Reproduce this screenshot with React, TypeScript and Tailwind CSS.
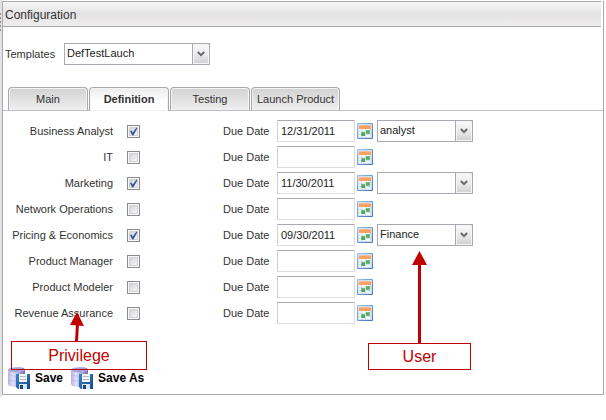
import { useState } from "react";

type Row = { id: string; label: string; checked: boolean; due: string; user?: string };

const rows: Row[] = [
  { id: "analyst", label: "Business Analyst", checked: true, due: "12/31/2011", user: "analyst" },
  { id: "it", label: "IT", checked: false, due: "" },
  { id: "marketing", label: "Marketing", checked: true, due: "11/30/2011", user: "" },
  { id: "network", label: "Network Operations", checked: false, due: "" },
  { id: "pricing", label: "Pricing & Economics", checked: true, due: "09/30/2011", user: "Finance" },
  { id: "manager", label: "Product Manager", checked: false, due: "" },
  { id: "modeler", label: "Product Modeler", checked: false, due: "" },
  { id: "revenue", label: "Revenue Assurance", checked: false, due: "" },
];

const tabs = ["Main", "Definition", "Testing", "Launch Product"];

function ComboBox({ id, label, value, options, width }: { id: string; label?: string; value: string; options: string[]; width: string }) {
  return (
    <div className={`relative h-[22px] ${width}`}>
      <select
        id={id}
        aria-label={label}
        defaultValue={value}
        className="block h-full w-full appearance-none border border-[#a9a9b1] bg-white pb-[2px] pl-[2px] pr-5 text-[11px] leading-[18px] text-[#222222] outline-none"
      >
        {options.map((o) => (
          <option key={o} value={o}>{o}</option>
        ))}
      </select>
      <span className="pointer-events-none absolute inset-y-0 right-0 flex w-[18px] items-center justify-center rounded-tr-[2px] border border-[#a9a9b1] bg-linear-to-b from-[#f8f8f8] via-[#ececed] to-[#d0d0d3] shadow-[inset_0_0_0_1px_#f4f4f4]">
        <svg width="8" height="6" viewBox="0 0 8 6" fill="none" stroke="#69696e" strokeWidth="2">
          <path d="M0.8 1 L4 4.2 L7.2 1" />
        </svg>
      </span>
    </div>
  );
}

function CheckBox({ id, checked }: { id: string; checked: boolean }) {
  return (
    <span className="relative block size-[13px]">
      <input
        id={id}
        type="checkbox"
        defaultChecked={checked}
        className="peer block size-[13px] appearance-none border border-[#8a8b8d] bg-linear-to-br from-[#c9cacd] to-[#ffffff] shadow-[inset_0_0_0_1px_#f8f8f8,inset_0_0_0_2px_#d0d2d5]"
      />
      <svg className="pointer-events-none absolute inset-0 hidden peer-checked:block" width="13" height="13" viewBox="0 0 13 13">
        <path d="M3 6 L4.6 5.4 L5.8 7.4 L9.4 2.4 L10.4 3.2 L6.4 10.4 L5 10.2 Z" fill="#3f559b" />
      </svg>
    </span>
  );
}

function CalendarIcon() {
  return (
    <svg width="16" height="16" viewBox="0 0 16 16">
      <defs>
        <linearGradient id="calFrame" x1="0" y1="0" x2="1" y2="1">
          <stop offset="0" stopColor="#9bc1ee" />
          <stop offset="1" stopColor="#4273bd" />
        </linearGradient>
      </defs>
      <rect width="16" height="16" rx="1" fill="url(#calFrame)" />
      <rect x="1" y="1" width="14" height="14" fill="#cfe0f5" />
      <rect x="2" y="6" width="11" height="8" fill="#f4f8fc" />
      <rect x="2" y="2" width="12" height="4" fill="#fba05f" />
      <rect x="2" y="2" width="12" height="1" fill="#fdba8a" />
      <path d="M2 8.5H13M2 11.5H13M4.5 6V14M8.5 6V14" stroke="#d3e0f0" />
      <rect x="9" y="7" width="4" height="4" fill="#76bd7a" />
      <rect x="9" y="8" width="3" height="2" fill="#55aa5b" />
      <rect x="4" y="9" width="4" height="4" fill="#76bd7a" />
      <rect x="5" y="10" width="3" height="3" fill="#4fa556" />
    </svg>
  );
}

function SaveIcon() {
  return (
    <svg width="22" height="22" viewBox="0 0 22 22">
      <defs>
        <linearGradient id="drum" x1="0" x2="1" y1="0" y2="0">
          <stop offset="0" stopColor="#b5b2e2" />
          <stop offset="0.3" stopColor="#e4e3fa" />
          <stop offset="1" stopColor="#6e6cb0" />
        </linearGradient>
        <linearGradient id="disk" x1="0" x2="1" y1="0" y2="1">
          <stop offset="0" stopColor="#3d82cf" />
          <stop offset="1" stopColor="#154a8c" />
        </linearGradient>
      </defs>
      <path d="M0 3 Q0 0 8.500 0 Q17 0 17 3 V17 Q17 20 8.500 20 Q0 20 0 17 Z" fill="url(#drum)" />
      <ellipse cx="8.500" cy="3" rx="8" ry="2.500" fill="#a9a6dc" />
      <path d="M0 8 Q8 11 17 8 M0 13 Q8 16 17 13" fill="none" stroke="#b5b2e2" strokeOpacity="0.6" />
      <path d="M8 7 H22 V22 H10 L8 20 Z" fill="url(#disk)" />
      <rect x="11" y="7" width="8" height="8" fill="#f7f9fc" />
      <path d="M12 9.500 H18 M12 12.500 H18" stroke="#aeb9c8" />
      <rect x="11" y="17" width="8" height="5" fill="#dfe6ee" />
      <rect x="12" y="18" width="3" height="4" fill="#174579" />
    </svg>
  );
}

export default function App() {
  const [active, setActive] = useState("Definition");
  return (
    <div className="flex bg-white font-['Liberation_Sans',Arial,sans-serif] text-[11px] text-[#333333]">
      <div className="flex w-[2px] shrink-0 flex-col gap-[2px] bg-[#e3e3e3] pt-[13px]">
        {[0, 1, 2, 3, 4].map((n) => (
          <span key={n} className="h-[2px] w-px bg-[#909090]" />
        ))}
      </div>
      <div className="min-w-0 flex-1 pb-[2px] pr-[2px] pt-px">
        <main className="relative border-x border-b border-[#a9a9b1]">
          <h1 className="mr-[2px] flex h-[26px] items-center border-y border-[#a9a9ab] bg-linear-to-b from-[#f7f8f7] via-[#e4e2e3] to-[#efeeef] pl-[2px] pt-[2px] text-[12px] font-normal leading-4">
            Configuration
          </h1>

          <div className="flex items-center pl-[2px] pt-4">
            <label htmlFor="templates" className="w-[59px]">Templates</label>
            <ComboBox id="templates" value="DefTestLauch" options={["DefTestLauch"]} width="w-[146px]" />
          </div>

          <div role="tablist" className="mt-[22px] flex h-6 gap-px border-b border-[#bdbdc4] pl-[5px]">
            {tabs.map((tab) => (
              <button
                key={tab}
                type="button"
                role="tab"
                aria-selected={tab === active}
                onClick={() => setActive(tab)}
                className={`min-w-[80px] rounded-t-[4px] border border-b-0 border-[#a9a9ab] px-[5px] shadow-[inset_0_0_0_1px_#f3f3f3] bg-linear-to-b ${
                  tab === active ? "h-6 from-[#ececec] to-white to-60% font-bold" : "h-[23px] from-[#d2d2d3] to-[#efefef]"
                }`}
              >
                {tab}
              </button>
            ))}
          </div>

          <form className="pb-[5px] pt-[9px]" onSubmit={(e) => e.preventDefault()}>
            <div className="flex flex-col gap-1">
              {rows.map((r) => (
                <div key={r.id} className="flex h-[22px] items-center">
                  <label htmlFor={`${r.id}-on`} className="w-[110px] text-right">{r.label}</label>
                  <div className="w-[110px] pl-[14px]">
                    <CheckBox id={`${r.id}-on`} checked={r.checked} />
                  </div>
                  <label htmlFor={`${r.id}-due`} className="w-[54px]">Due Date</label>
                  <input
                    id={`${r.id}-due`}
                    type="text"
                    defaultValue={r.due}
                    className="h-[22px] w-[78px] border border-[#dcdce0] border-t-[#a9a9b1] border-l-[#cfcfd4] bg-white px-[3px] text-[11px] text-[#222222] outline-none"
                  />
                  <button type="button" aria-label={`Pick due date for ${r.label}`} className="ml-[2px] mr-1">
                    <CalendarIcon />
                  </button>
                  {r.user !== undefined && (
                    <ComboBox
                      id={`${r.id}-user`}
                      label={`User for ${r.label}`}
                      value={r.user}
                      options={["", "analyst", "Finance"]}
                      width="w-[96px]"
                    />
                  )}
                </div>
              ))}
            </div>
            <div className="mt-[43px] flex gap-2 pl-[5px] text-[12px] font-bold text-black">
              <button type="button" className="flex items-center gap-[5px]"><SaveIcon />Save</button>
              <button type="button" className="flex items-center gap-[5px]"><SaveIcon />Save As</button>
            </div>
          </form>

          <svg className="pointer-events-none absolute left-0 top-0" width="480" height="394" viewBox="3 1 480 394" fill="#c00000">
            <path d="M77 312 L84 326 L70 325 Z" />
            <path d="M77.500 324 L76.500 341" stroke="#c00000" strokeWidth="3" />
            <path d="M419.500 251 L427 265 H412 Z" />
            <path d="M419.500 264 V343" stroke="#c00000" strokeWidth="3" />
          </svg>
          <div className="absolute left-[8px] top-[340px] flex h-[29px] w-[136px] items-center justify-center border border-[#c00000] text-[16px] text-[#c00000]">
            Privilege
          </div>
          <div className="absolute left-[365px] top-[342px] flex h-[27px] w-[103px] items-center justify-center border border-[#c00000] text-[16px] text-[#c00000]">
            User
          </div>
        </main>
      </div>
    </div>
  );
}
